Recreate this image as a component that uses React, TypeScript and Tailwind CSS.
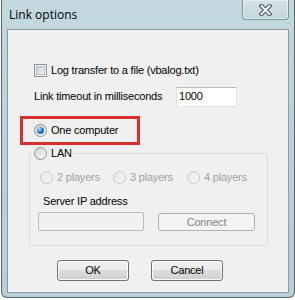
import React from "react";

const ui = "font-['Liberation_Sans',Arial,sans-serif] text-[11px] leading-[13px] tracking-[-0.2px]";

function Radio({ checked, disabled }: { checked?: boolean; disabled?: boolean }) {
  return (
    <span
      className={`flex h-[13px] w-[13px] shrink-0 items-center justify-center rounded-full border ${
        disabled
          ? "border-[#c9c9c9] bg-[linear-gradient(135deg,#e6e6e6,#f8f8f8)]"
          : "border-[#8e8f8f] bg-[linear-gradient(135deg,#cfd2d6,#fbfbfb)]"
      }`}
    >
      {checked && (
        <span className="h-[7px] w-[7px] rounded-full bg-[radial-gradient(circle_at_35%_30%,#a6e4ff,#2a82c4_45%,#0c3d66)]" />
      )}
    </span>
  );
}

function Checkbox() {
  return (
    <span className="flex h-[13px] w-[13px] shrink-0 border border-[#8e8f8f] bg-[#f6f6f6] p-[1px]">
      <span className="h-full w-full border border-[#b7bcc1] bg-[linear-gradient(135deg,#c9cdd3,#f4f5f6)]" />
    </span>
  );
}

function Button({ label, disabled }: { label: string; disabled?: boolean }) {
  return (
    <div
      className={`flex h-full items-center justify-center rounded-[3px] border ${
        disabled
          ? "border-[#adb2b5] bg-[#f4f4f4] text-[#838383]"
          : "border-[#707070] bg-[linear-gradient(#f2f2f2_0%,#ebebeb_50%,#dddddd_50%,#cfcfcf_100%)] text-black shadow-[inset_0_0_0_1px_#fbfbfb]"
      }`}
    >
      {label}
    </div>
  );
}

function CloseGlyph() {
  return (
    <svg width="13" height="12" viewBox="0 0 13 12">
      <path d="M2.5 2 L10.5 10 M10.5 2 L2.5 10" stroke="#4a535b" strokeWidth="4.2" strokeLinecap="square" />
      <path d="M2.5 2 L10.5 10 M10.5 2 L2.5 10" stroke="#f4f6f7" strokeWidth="2" strokeLinecap="square" />
    </svg>
  );
}

export default function App() {
  return (
    <div className="h-[300px] w-[295px] bg-white">
      <div className="ml-[1px] flex h-[298px] w-[294px] flex-col rounded-b-[6px] border border-t-0 border-[#56646b] bg-[linear-gradient(#c3d9df,#bad2d9_40%,#b7cfd6)] px-[5px] pb-[4px]">
        {/* title bar */}
        <div className="flex h-[29px] items-start justify-between">
          <div className="ml-[2px] mt-[7px] font-['Open_Sans','Noto_Sans',sans-serif] text-[12px] leading-[16px] text-black">
            Link options
          </div>
          <div className="flex h-[20px] w-[47px] items-center justify-center rounded-b-[4px] border border-t-0 border-[#7e959e] bg-[linear-gradient(#d3e3e7,#c2d7dd)] shadow-[inset_0_0_0_1px_#e4eef1]">
            <CloseGlyph />
          </div>
        </div>

        {/* client area */}
        <div className={`flex flex-1 flex-col border border-[#8a9ba4] bg-[#f0f0f0] text-black ${ui}`}>
          <div className="ml-[26px] mt-[34px] flex h-[13px] items-center gap-[4px]">
            <Checkbox />
            <span>Log transfer to a file (vbalog.txt)</span>
          </div>

          <div className="ml-[26px] mt-[10px] flex h-[19px] items-center">
            <span className="w-[142px]">Link timeout in milliseconds</span>
            <div className="flex h-[20px] w-[61px] items-center border border-[#dfe2e7] border-t-[#b5b9c0] bg-white pl-[2px]">
              1000
            </div>
          </div>

          <div className="ml-[12px] mt-[10px] flex h-[29px] w-[120px] items-center gap-[4px] border-[3px] border-[#d9302c] pl-[11px]">
            <Radio checked />
            <span>One computer</span>
          </div>

          <fieldset className="ml-[21px] mt-[2px] h-[99px] w-[239px] rounded-[3px] border border-[#d5dde2]">
            <legend className="ml-[3px] flex h-[13px] items-center gap-[4px] px-[1px]">
              <Radio />
              <span>LAN</span>
            </legend>
            <div className="ml-[10px] mt-[11px] flex h-[13px] items-center text-[#a0a0a0]">
              <div className="flex w-[73px] items-center gap-[4px]">
                <Radio disabled />
                <span>2 players</span>
              </div>
              <div className="flex w-[74px] items-center gap-[4px]">
                <Radio disabled />
                <span>3 players</span>
              </div>
              <div className="flex items-center gap-[4px]">
                <Radio disabled />
                <span>4 players</span>
              </div>
            </div>
            <div className="ml-[13px] mt-[11px]">Server IP address</div>
            <div className="ml-[8px] mt-[4px] flex items-start">
              <div className="h-[19px] w-[106px] rounded-[2px] border border-[#b9bcbf] bg-[#f0f0f0]" />
              <div className="ml-[14px] mt-[1px] h-[18px] w-[97px]">
                <Button label="Connect" disabled />
              </div>
            </div>
          </fieldset>

          <div className="ml-[49px] mt-[14px] flex gap-[22px]">
            <div className="h-[21px] w-[72px]">
              <Button label="OK" />
            </div>
            <div className="h-[21px] w-[72px]">
              <Button label="Cancel" />
            </div>
          </div>
        </div>
      </div>
    </div>
  );
}
